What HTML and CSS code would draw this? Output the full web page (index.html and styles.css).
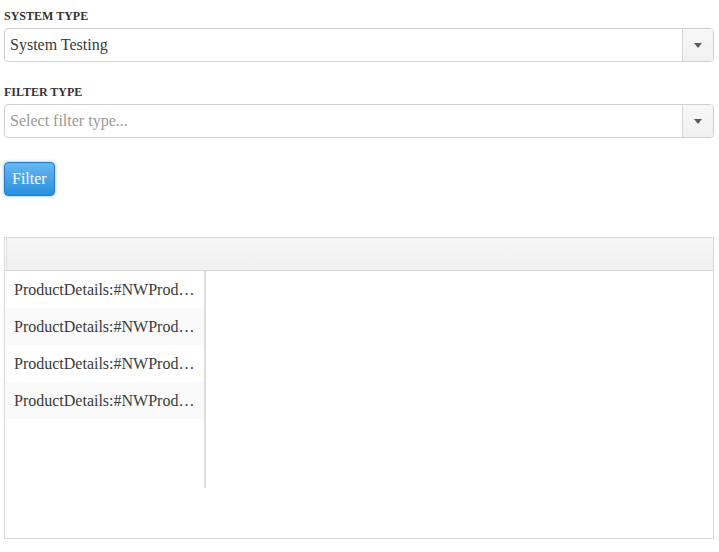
FILE: index.html
```html
<!DOCTYPE html>
<html>
<head>
<meta charset="utf-8">
<link rel="stylesheet" href="styles.css">
</head>
<body>
<div class="page">
  <label class="field-label">SYSTEM TYPE</label>
  <div class="select">
    <span class="select-value">System Testing</span>
    <span class="select-arrow"><span class="tri"></span></span>
  </div>

  <label class="field-label second">FILTER TYPE</label>
  <div class="select">
    <span class="select-value placeholder">Select filter type...</span>
    <span class="select-arrow"><span class="tri"></span></span>
  </div>

  <button class="btn-filter">Filter</button>

  <div class="grid">
    <div class="grid-header"><div class="grid-header-inner"></div></div>
    <div class="grid-body">
      <div class="grid-col">
        <div class="row">ProductDetails:#NWProd…</div>
        <div class="row alt">ProductDetails:#NWProd…</div>
        <div class="row">ProductDetails:#NWProd…</div>
        <div class="row alt">ProductDetails:#NWProd…</div>
      </div>
    </div>
  </div>
</div>
</body>
</html>
```

FILE: styles.css
```css
html, body {
  margin: 0;
  padding: 0;
  background: #fff;
}
body {
  font-family: "Liberation Serif", "Times New Roman", serif;
  color: #2e2e2e;
}
.page {
  padding: 9px 5px 0 4px;
  display: flex;
  flex-direction: column;
  align-items: stretch;
}
.field-label {
  display: block;
  font-size: 12px;
  line-height: 14px;
  font-weight: bold;
  color: #333;
  margin-bottom: 5px;
}
.field-label.second {
  margin-top: 23px;
}
.select {
  box-sizing: border-box;
  height: 34px;
  border: 1px solid #cfcfcf;
  border-radius: 4px;
  display: flex;
  align-items: stretch;
  background: #fff;
  overflow: hidden;
}
.select-value {
  flex: 1;
  display: flex;
  align-items: center;
  padding-left: 5px;
  font-size: 16px;
  color: #3a3a3a;
}
.select-value.placeholder {
  color: #9a9a9a;
}
.select-arrow {
  width: 30px;
  border-left: 1px solid #d8d8d8;
  background: linear-gradient(#f7f7f7, #f1f1f1);
  display: flex;
  align-items: center;
  justify-content: center;
}
.tri {
  width: 0;
  height: 0;
  border-left: 4px solid transparent;
  border-right: 4px solid transparent;
  border-top: 5px solid #555a66;
  margin-top: 1px;
}
.btn-filter {
  align-self: flex-start;
  margin-top: 24px;
  box-sizing: border-box;
  height: 34px;
  padding: 0 7px;
  font-family: "Liberation Serif", "Times New Roman", serif;
  font-size: 16px;
  color: #fff;
  border: 1px solid #2579c4;
  border-radius: 4px;
  background: linear-gradient(#67b6ef, #2a90e0);
  box-shadow: 0 0 3px 1px rgba(60, 150, 225, 0.35);
}
.grid {
  margin-top: 41px;
  box-sizing: border-box;
  height: 302px;
  border: 1px solid #d9d9d9;
  display: flex;
  flex-direction: column;
}
.grid-header {
  height: 32px;
  border-bottom: 1px solid #d5d5d5;
  display: flex;
}
.grid-header-inner {
  flex: 1;
  margin-left: 1px;
  border-left: 1px solid #dcdcdc;
  background: linear-gradient(#f6f6f6, #f0f0f0);
}
.grid-body {
  flex: 1;
  display: flex;
  align-items: flex-start;
}
.grid-col {
  width: 199px;
  height: 217px;
  border-right: 2px solid #dcdcdc;
}
.row {
  height: 37px;
  line-height: 37px;
  padding: 0 0 0 9px;
  font-size: 16px;
  color: #3a3a3a;
  white-space: nowrap;
}
.row.alt {
  background: #fafafa;
}
```
